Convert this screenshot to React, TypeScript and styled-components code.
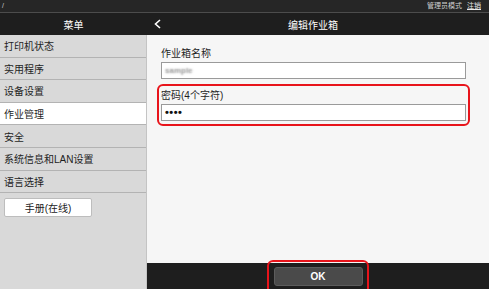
import React from 'react';
import styled, { createGlobalStyle } from 'styled-components';

const GlobalStyle = createGlobalStyle`
    html, body {
        margin: 0;
        padding: 0;
        background: #ffffff;
    }
    body {
        font-family: 'Liberation Sans', 'Noto Sans CJK SC', sans-serif;
    }
`;

const Screen = styled.div`
    width: 489px;
    height: 289px;
    display: flex;
    flex-direction: column;
    background: #f6f6f6;
    overflow: visible;
`;

const StatusBar = styled.div`
    height: 12px;
    background: #262626;
    border-bottom: 1px solid #4c4c4c;
    display: flex;
    align-items: center;
    justify-content: space-between;
    padding: 0 8px 0 2px;
    color: #cfcfcf;
    font-size: 7px;
    line-height: 12px;

    & > span.links {
        display: flex;
        gap: 5px;
    }

    & u {
        color: #e8e8e8;
    }
`;

const HeaderBar = styled.div`
    height: 22px;
    background: #1e1e1e;
    display: flex;
    color: #ffffff;
    font-size: 10px;
`;

const HeaderMenu = styled.div`
    width: 147px;
    display: flex;
    align-items: center;
    justify-content: center;
`;

const HeaderMain = styled.div`
    flex: 1;
    position: relative;
    display: flex;
    align-items: center;
    justify-content: center;
    padding-right: 10px;
`;

const BackArrow = styled.svg`
    position: absolute;
    left: 7px;
    top: 6px;
`;

const Body = styled.div`
    flex: 1;
    display: flex;
    min-height: 0;
`;

const Sidebar = styled.ul`
    width: 146px;
    margin: 0;
    padding: 0;
    list-style: none;
    background: #d9d9d9;
    border-right: 1px solid #c4c4c4;
    display: flex;
    flex-direction: column;
`;

const MenuItem = styled.li<{ $active?: boolean }>`
    height: 22.6px;
    box-sizing: border-box;
    padding-left: 4px;
    display: flex;
    align-items: center;
    font-size: 10px;
    color: #1f1f1f;
    background: ${(p) => (p.$active ? '#ffffff' : 'transparent')};
    border-bottom: 1px solid #b3b3b3;
`;

const ManualButton = styled.button`
    margin: 5px 0 0 4px;
    width: 88px;
    height: 19px;
    background: #ffffff;
    border: 1px solid #bdbdbd;
    border-radius: 2px;
    font-family: inherit;
    font-size: 10px;
    color: #222;
    padding: 0;
`;

const Main = styled.div`
    flex: 1;
    display: flex;
    flex-direction: column;
`;

const Form = styled.div`
    flex: 1;
    padding: 6.5px 19px 0 10px;
    display: flex;
    flex-direction: column;
`;

const Field = styled.div<{ $highlight?: boolean }>`
    display: flex;
    flex-direction: column;
    padding: 3px 2px 3px 2px;
    border: 2px solid ${(p) => (p.$highlight ? '#e8141b' : 'transparent')};
    border-radius: 6px;
`;

const Label = styled.div`
    font-size: 10px;
    color: #1f1f1f;
    height: 13px;
    line-height: 13px;
    margin-bottom: 2px;
`;

const Input = styled.div<{ $faded?: boolean }>`
    height: 17px;
    box-sizing: border-box;
    background: #ffffff;
    border: 1px solid #9a9a9a;
    padding-left: 3px;
    display: flex;
    align-items: center;
    font-size: ${(p) => (p.$faded ? '8px' : '11px')};
    color: ${(p) => (p.$faded ? 'transparent' : '#111')};
    text-shadow: ${(p) => (p.$faded ? '0 0 2px rgba(120,120,120,0.8)' : 'none')};
    letter-spacing: ${(p) => (p.$faded ? '0' : '0.5px')};
    font-weight: bold;
`;

const FooterBar = styled.div`
    height: 26px;
    background: #1e1e1e;
    display: flex;
    align-items: center;
    justify-content: center;
`;

const OkWrap = styled.div`
    position: relative;
`;

const OkButton = styled.button`
    width: 89px;
    height: 19px;
    background: #4a4a4a;
    border: 1px solid #5c5c5c;
    border-radius: 3px;
    color: #ffffff;
    font-family: 'Liberation Sans', sans-serif;
    font-weight: bold;
    font-size: 10px;
    padding: 0;
    display: block;
`;

const RedRing = styled.div`
    position: absolute;
    left: -7px;
    top: -7px;
    right: -6px;
    bottom: -8px;
    border: 2px solid #e8141b;
    border-radius: 6px;
`;

const menu = ['打印机状态', '实用程序', '设备设置', '作业管理', '安全', '系统信息和LAN设置', '语言选择'];

export default function App() {
    return (
        <>
            <GlobalStyle />
            <Screen>
                <StatusBar>
                    <span>/</span>
                    <span className='links'>
                        <span>管理员模式</span>
                        <u>注销</u>
                    </span>
                </StatusBar>
                <HeaderBar>
                    <HeaderMenu>菜单</HeaderMenu>
                    <HeaderMain>
                        <BackArrow width='7' height='10' viewBox='0 0 7 10'>
                            <path d='M6 1 L1.5 5 L6 9' stroke='#fff' strokeWidth='1.6' fill='none' />
                        </BackArrow>
                        编辑作业箱
                    </HeaderMain>
                </HeaderBar>
                <Body>
                    <Sidebar>
                        {menu.map((m) => (
                            <MenuItem key={m} $active={m === '作业管理'}>
                                {m}
                            </MenuItem>
                        ))}
                        <li>
                            <ManualButton>手册(在线)</ManualButton>
                        </li>
                    </Sidebar>
                    <Main>
                        <Form>
                            <Field>
                                <Label>作业箱名称</Label>
                                <Input $faded>sample</Input>
                            </Field>
                            <Field $highlight>
                                <Label>密码(4个字符)</Label>
                                <Input>••••</Input>
                            </Field>
                        </Form>
                        <FooterBar>
                            <OkWrap>
                                <OkButton>OK</OkButton>
                                <RedRing />
                            </OkWrap>
                        </FooterBar>
                    </Main>
                </Body>
            </Screen>
        </>
    );
}
